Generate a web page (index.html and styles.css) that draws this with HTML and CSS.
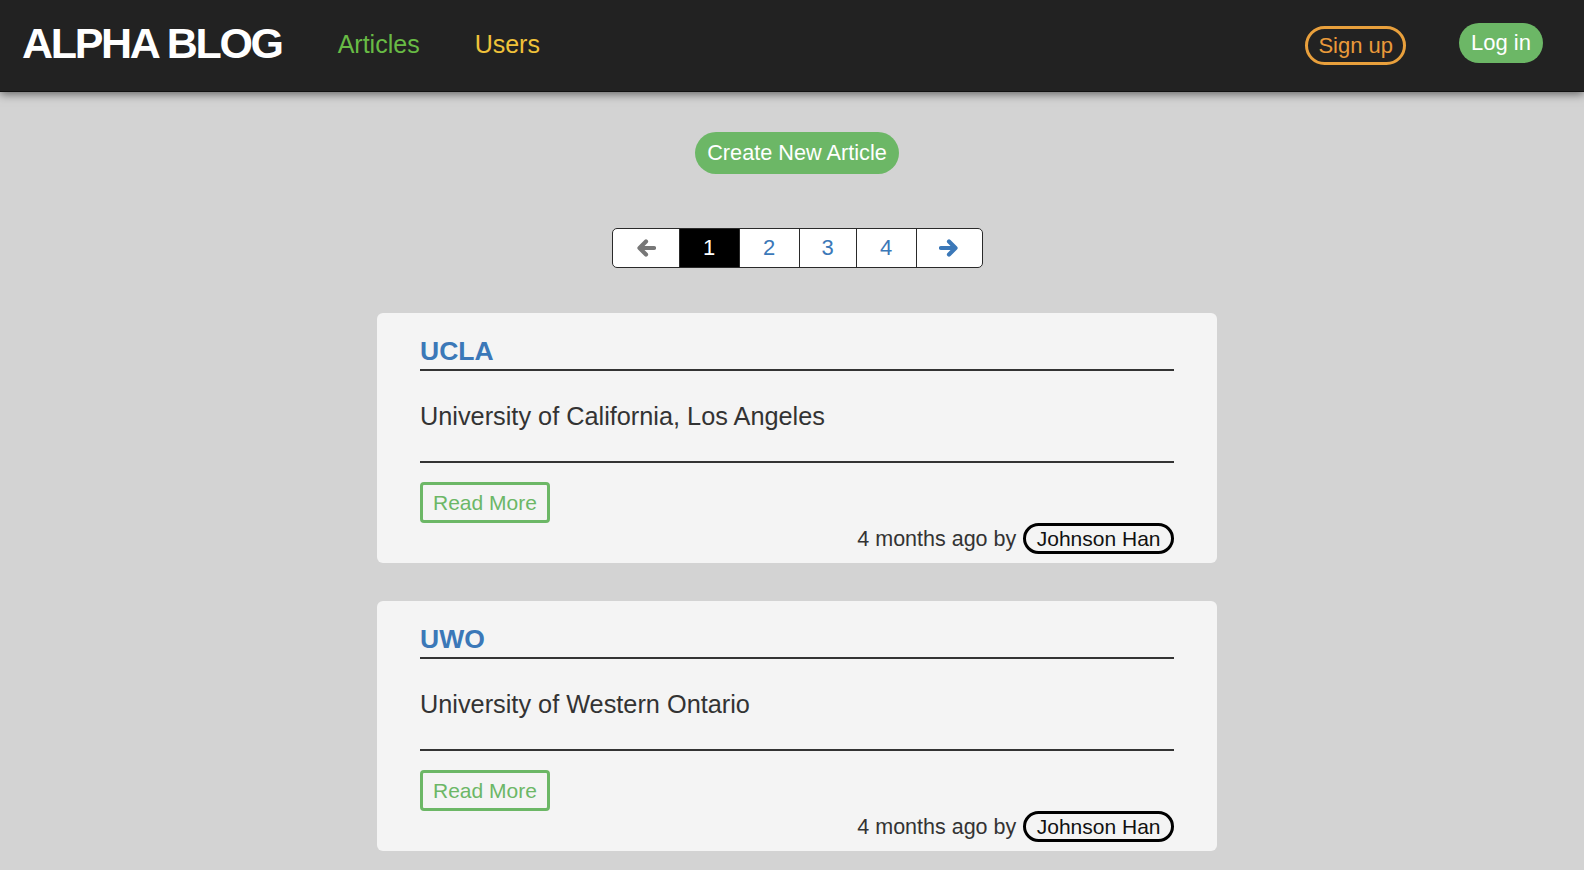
FILE: index.html
```html
<!DOCTYPE html>
<html>
<head>
<meta charset="utf-8">
<title>Alpha Blog</title>
<link rel="stylesheet" href="styles.css">
</head>
<body>
<header class="navbar">
  <a class="logo" href="#">ALPHA BLOG</a>
  <nav class="nav-links">
    <a class="nav-articles" href="#">Articles</a>
    <a class="nav-users" href="#">Users</a>
  </nav>
  <div class="nav-right">
    <a class="btn-signup" href="#">Sign up</a>
    <a class="btn-login" href="#">Log in</a>
  </div>
</header>

<main class="main">
  <a class="btn-create" href="#">Create New Article</a>

  <div class="pagination">
    <a class="page-cell page-arrow page-prev" href="#">
      <svg width="20" height="18" viewBox="0 0 20 18"><path d="M18 9H4 M10 2.5L3.5 9L10 15.5" fill="none" stroke="#777" stroke-width="4.2" stroke-linecap="round" stroke-linejoin="round"/></svg>
    </a>
    <a class="page-cell page-active" href="#">1</a>
    <a class="page-cell" href="#">2</a>
    <a class="page-cell page-narrow" href="#">3</a>
    <a class="page-cell" href="#">4</a>
    <a class="page-cell page-arrow page-next" href="#">
      <svg width="20" height="18" viewBox="0 0 20 18"><path d="M2 9H16 M10 2.5L16.5 9L10 15.5" fill="none" stroke="#3b78b8" stroke-width="4.2" stroke-linecap="round" stroke-linejoin="round"/></svg>
    </a>
  </div>

  <article class="card">
    <h2 class="card-title"><a href="#">UCLA</a></h2>
    <p class="card-body">University of California, Los Angeles</p>
    <div class="card-actions"><a class="btn-read" href="#">Read More</a></div>
    <div class="card-footer">4 months ago by <span class="author">Johnson Han</span></div>
  </article>

  <article class="card">
    <h2 class="card-title"><a href="#">UWO</a></h2>
    <p class="card-body">University of Western Ontario</p>
    <div class="card-actions"><a class="btn-read" href="#">Read More</a></div>
    <div class="card-footer">4 months ago by <span class="author">Johnson Han</span></div>
  </article>
</main>
</body>
</html>
```

FILE: styles.css
```css
* { box-sizing: border-box; }

html, body {
  margin: 0;
  padding: 0;
}

body {
  background: #d3d3d3;
  font-family: "Liberation Sans", Arial, sans-serif;
  color: #333;
  height: 870px;
  overflow: hidden;
}

a { text-decoration: none; }

.navbar {
  position: relative;
  z-index: 2;
  height: 92px;
  background: #222;
  border-bottom: 1px solid #111;
  box-shadow: 0 2px 9px rgba(0, 0, 0, 0.55);
  display: flex;
  align-items: center;
  padding: 0 41px 0 22px;
}

.logo {
  color: #fff;
  font-weight: bold;
  font-size: 43px;
  letter-spacing: -2.3px;
  line-height: 1;
  margin-bottom: 4px;
}

.nav-links {
  display: flex;
  gap: 55px;
  margin-left: 56px;
  margin-bottom: 2px;
}

.nav-links a {
  font-size: 25px;
  line-height: 1;
}

.nav-articles { color: #68bb45; }
.nav-users { color: #f0c23a; }

.nav-right {
  margin-left: auto;
  display: flex;
  align-items: center;
  gap: 53px;
}

.btn-signup {
  display: inline-block;
  height: 39px;
  line-height: 33px;
  padding: 0 10px;
  border: 3px solid #e9a03c;
  border-radius: 20px;
  color: #ea9a3a;
  font-size: 22px;
  margin-bottom: 1px;
}

.btn-login {
  display: inline-block;
  height: 40px;
  line-height: 40px;
  padding: 0 12px;
  background: #6cb766;
  border-radius: 20px;
  color: #fff;
  font-size: 22px;
  margin-bottom: 6px;
}

.main {
  display: flex;
  flex-direction: column;
  align-items: center;
  padding: 40px 0 0 10px;
}

.btn-create {
  display: inline-block;
  height: 42px;
  line-height: 42px;
  padding: 0 12px;
  background: #6cb766;
  color: #fff;
  border-radius: 21px;
  font-size: 21.7px;
}

.pagination {
  margin-top: 54px;
  display: flex;
  height: 40px;
  border: 1.5px solid #2a2a2a;
  border-radius: 5px;
  background: #fff;
  overflow: hidden;
}

.page-cell {
  width: 60px;
  display: flex;
  align-items: center;
  justify-content: center;
  font-size: 22px;
  color: #3b78b8;
  border-left: 1.5px solid #2a2a2a;
}

.page-narrow { width: 57px; }

.page-arrow { width: 66px; }
.page-prev { border-left: none; }

.page-active {
  background: #000;
  color: #fff;
}

.card {
  width: 840px;
  background: #f4f4f4;
  border-radius: 6px;
  padding: 23px 43px 9px;
  margin-top: 45px;
}

.card + .card { margin-top: 38px; }

.card-title {
  margin: 0;
  font-size: 26.5px;
  line-height: 30px;
  font-weight: bold;
  padding-bottom: 3px;
  border-bottom: 2px solid #333;
}

.card-title a { color: #3b78b8; }

.card-body {
  margin: 0;
  font-size: 25.3px;
  line-height: 30px;
  padding: 30px 0;
  border-bottom: 2px solid #333;
  color: #333;
}

.card-actions {
  margin-top: 19px;
  display: flex;
}

.btn-read {
  display: inline-block;
  height: 41px;
  line-height: 35px;
  padding: 0 10px;
  border: 3px solid #6cb766;
  border-radius: 4px;
  color: #6cb766;
  font-size: 21px;
}

.card-footer {
  text-align: right;
  font-size: 21.5px;
  line-height: 30px;
  color: #333;
}

.author {
  display: inline-block;
  line-height: 23px;
  padding: 1px 10.5px;
  border: 3px solid #000;
  border-radius: 16px;
  color: #111;
  font-size: 21px;
  vertical-align: 0px;
  margin-left: 1px;
}
```
